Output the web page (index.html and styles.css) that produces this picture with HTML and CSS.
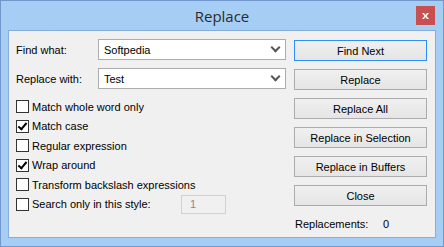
FILE: index.html
```html
<!DOCTYPE html>
<html lang="en">
<head>
  <meta charset="UTF-8" />
  <title>Replace</title>
  <link rel="stylesheet" href="styles.css">
</head>
<body>
  <div class="window">
    <div class="titlebar">
      <span class="title">Replace</span>
      <span class="close-btn">
        <svg width="7" height="6" viewBox="0 0 7 6"><path d="M0 0h2l1.5 2 1.5-2h2L4.5 3 7 6H5L3.5 4 2 6H0l2.5-3z" fill="#fff"/></svg>
      </span>
    </div>

    <div class="client">
      <div class="left">
        <div class="field">
          <label>Find what:</label>
          <div class="combo"><span>Softpedia</span><i class="chevron"></i></div>
        </div>
        <div class="field">
          <label>Replace with:</label>
          <div class="combo"><span>Test</span><i class="chevron"></i></div>
        </div>

        <div class="options">
          <div class="check"><span class="box"></span>Match whole word only</div>
          <div class="check"><span class="box checked"></span>Match case</div>
          <div class="check"><span class="box"></span>Regular expression</div>
          <div class="check"><span class="box checked"></span>Wrap around</div>
          <div class="check"><span class="box"></span>Transform backslash expressions</div>
          <div class="check"><span class="box"></span>Search only in this style:<span class="spin">1</span></div>
        </div>
      </div>

      <div class="right">
        <button class="btn default">Find Next</button>
        <button class="btn">Replace</button>
        <button class="btn">Replace All</button>
        <button class="btn">Replace in Selection</button>
        <button class="btn">Replace in Buffers</button>
        <button class="btn">Close</button>
        <div class="count"><span>Replacements:</span><span>0</span></div>
      </div>
    </div>
  </div>
</body>
</html>
```

FILE: styles.css
```css
body {
  margin: 0;
  font-family: 'Liberation Sans', Arial, sans-serif;
  font-size: 11px;
  color: #000;
  background: #fff;
}

.window {
  width: 444px;
  height: 247px;
  box-sizing: border-box;
  border: 1px solid #7197cc;
  background: #a6cef5;
  display: flex;
  flex-direction: column;
}

.titlebar {
  height: 29px;
  flex: none;
  position: relative;
  display: flex;
  justify-content: center;
  align-items: center;
}

.title {
  font-family: 'Open Sans', 'Noto Sans', sans-serif;
  font-size: 15px;
  color: #2b2b2b;
  margin-top: 1px;
}

.close-btn {
  position: absolute;
  right: 8px;
  top: 5px;
  width: 19px;
  height: 19px;
  background: #c75050;
  display: flex;
  align-items: center;
  justify-content: center;
}

.client {
  margin: 0 7px 0 7px;
  height: 208px;
  flex: none;
  box-sizing: border-box;
  border: 1px solid #86aedb;
  background: #f0f0f0;
  display: flex;
  padding: 8px 8px 0 7px;
  gap: 8px;
}

.left {
  width: 270px;
}

.field {
  display: flex;
  align-items: center;
  height: 21px;
  margin-bottom: 8px;
}

.field label {
  width: 82px;
}

.combo {
  width: 188px;
  height: 21px;
  box-sizing: border-box;
  border: 1px solid #acacac;
  background: #fff;
  display: flex;
  align-items: center;
  justify-content: space-between;
  padding: 0 6px 0 5px;
}

.chevron {
  width: 5px;
  height: 5px;
  border-right: 2px solid #555;
  border-bottom: 2px solid #555;
  transform: rotate(45deg);
  margin-top: -4px;
}

.options {
  margin-top: 6px;
}

.check {
  display: flex;
  align-items: center;
  height: 19.5px;
}

.box {
  width: 13px;
  height: 13px;
  box-sizing: border-box;
  border: 1px solid #333;
  background: #fff;
  margin-right: 3px;
  position: relative;
}

.box.checked::after {
  content: "";
  position: absolute;
  left: 3px;
  top: 0px;
  width: 3px;
  height: 7px;
  border-right: 2px solid #000;
  border-bottom: 2px solid #000;
  transform: rotate(40deg);
}

.spin {
  margin-left: auto;
  margin-right: 60px;
  width: 45px;
  height: 19px;
  box-sizing: border-box;
  border: 1px solid #d0d0d0;
  color: #8a8a8a;
  padding-left: 8px;
  line-height: 17px;
}

.right {
  width: 133px;
  display: flex;
  flex-direction: column;
  padding-top: 1px;
}

.btn {
  font: inherit;
  height: 21px;
  margin-bottom: 8px;
  border: 1px solid #acacac;
  background: linear-gradient(#f0f0f0, #e5e5e5);
  color: #000;
  padding: 0;
}

.btn.default {
  border-color: #2c8ef8;
}

.count {
  display: flex;
  margin-top: 4px;
  padding-left: 1px;
}

.count span:first-child {
  width: 88px;
}
```
